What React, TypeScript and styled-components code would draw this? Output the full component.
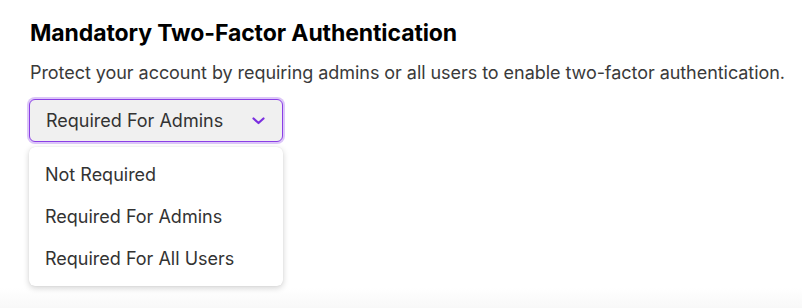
import React, { useState } from "react";
import styled, { createGlobalStyle } from "styled-components";

const GlobalStyle = createGlobalStyle`
  html, body {
    margin: 0;
    height: 100%;
  }
  body {
    font-family: Inter, "Noto Sans", sans-serif;
    color: #2c2c2c;
    background: linear-gradient(to bottom, #ffffff 0px, #ffffff 288px, #f8f8f8 308px);
    -webkit-font-smoothing: antialiased;
  }
`;

const Section = styled.section`
  padding: 19px 30px;
  display: flex;
  flex-direction: column;
  align-items: flex-start;
`;

const Title = styled.h2`
  margin: 0;
  font-size: 23px;
  font-weight: 700;
  color: #000;
  line-height: 28px;
  letter-spacing: -0.1px;
  white-space: nowrap;
`;

const Description = styled.p`
  margin: 13px 0 0;
  font-size: 18px;
  line-height: 26px;
  color: #3a3a3a;
  letter-spacing: -0.05px;
  white-space: nowrap;
`;

const SelectWrap = styled.div`
  position: relative;
  margin-top: 13px;
  margin-left: -1px;
  width: 254px;
`;

const SelectButton = styled.button`
  width: 100%;
  height: 43px;
  display: flex;
  align-items: center;
  justify-content: space-between;
  padding: 0 17px 0 16px;
  background: #f0f0f0;
  border: 1px solid #8a3ee6;
  border-radius: 6px;
  box-shadow: 0 0 0 2px #dcc6f8;
  font-family: inherit;
  font-size: 18px;
  color: #333;
  cursor: pointer;
  outline: none;
`;

const Menu = styled.ul`
  position: absolute;
  top: 48px;
  left: 0;
  width: 100%;
  margin: 0;
  padding: 6px 0 7px;
  list-style: none;
  background: #fff;
  border-radius: 6px;
  box-shadow: 0 2px 6px rgba(0, 0, 0, 0.18), 0 0 1px rgba(0, 0, 0, 0.12);
`;

const Option = styled.li`
  height: 42px;
  display: flex;
  align-items: center;
  padding: 0 16px;
  font-size: 18px;
  color: #333;
  cursor: pointer;
`;

const options = ["Not Required", "Required For Admins", "Required For All Users"];

export default function App() {
  const [value, setValue] = useState("Required For Admins");
  const [open, setOpen] = useState(true);

  return (
    <>
      <GlobalStyle />
      <Section>
        <Title>Mandatory Two-Factor Authentication</Title>
        <Description>
          Protect your account by requiring admins or all users to enable two-factor authentication.
        </Description>
        <SelectWrap>
          <SelectButton onClick={() => setOpen(!open)}>
            <span>{value}</span>
            <svg width="13" height="8" viewBox="0 0 13 8" fill="none">
              <path d="M1.5 1.5 L6.5 6 L11.5 1.5" stroke="#7b2fe0" strokeWidth="2.2" strokeLinecap="round" strokeLinejoin="round" />
            </svg>
          </SelectButton>
          {open && (
            <Menu>
              {options.map((o) => (
                <Option key={o} onClick={() => { setValue(o); setOpen(false); }}>
                  {o}
                </Option>
              ))}
            </Menu>
          )}
        </SelectWrap>
      </Section>
    </>
  );
}
